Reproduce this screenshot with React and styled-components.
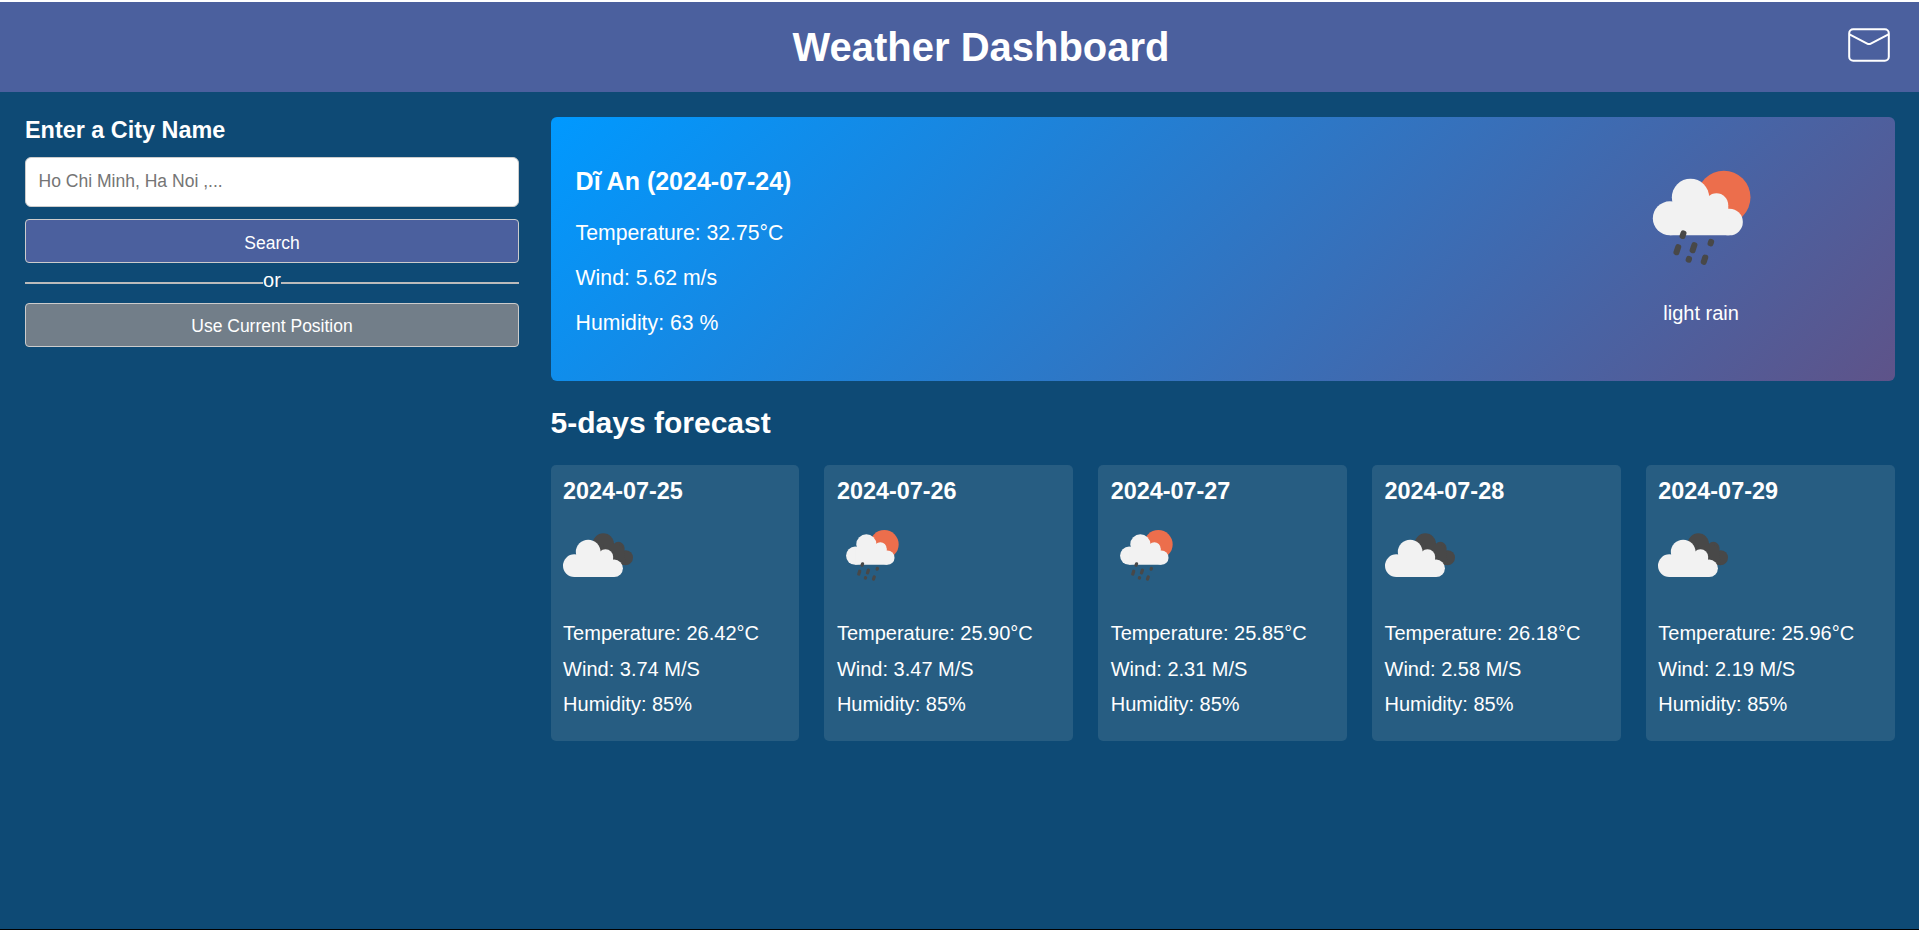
import React from "react";
import styled, { createGlobalStyle } from "styled-components";

const GlobalStyle = createGlobalStyle`
  * { box-sizing: border-box; margin: 0; padding: 0; }
  body {
    margin: 0;
    background: #0e4a75;
    color: #fff;
    font-family: Arial, "Liberation Sans", sans-serif;
    font-size: 20px;
  }
`;

const Page = styled.div`
  display: flex;
  flex-direction: column;
  height: 930px;
  border-top: 2px solid #fff;
  border-bottom: 1px solid #000;
  overflow: hidden;
`;

const Header = styled.header`
  display: flex;
  align-items: center;
  height: 90px;
  padding: 0 29px 0 114px;
  background: #4b609e;
`;

const Title = styled.h1`
  flex: 1;
  font-size: 40px;
  line-height: 46px;
  text-align: center;
`;

const MailIcon = styled.svg`
  display: block;
  width: 42px;
  height: 34px;
  margin-bottom: 4px;
  fill: none;
  stroke: #fff;
  stroke-width: 2;
`;

const Main = styled.main`
  display: flex;
  gap: 31.6px;
  padding: 25px 24.4px 0 25px;
`;

const Sidebar = styled.aside`
  width: 494px;
  flex: none;
`;

const Label = styled.h3`
  font-size: 23.4px;
  line-height: 26px;
  margin-bottom: 14px;
`;

const CityInput = styled.input`
  display: block;
  width: 100%;
  height: 50px;
  padding: 0 12.5px 1px;
  margin-bottom: 12px;
  border: 1px solid #ccc;
  border-radius: 6px;
  background: #fff;
  font-family: inherit;
  font-size: 17.55px;
  &::placeholder { color: #757575; }
`;

const Button = styled.button`
  display: block;
  width: 100%;
  height: 44px;
  padding-top: ${(p) => (p.$muted ? 2 : 4)}px;
  border: 1px solid #ccc;
  border-radius: 4px;
  background: ${(p) => (p.$muted ? "#727e89" : "#4b609e")};
  color: #fff;
  font-family: inherit;
  font-size: 17.5px;
`;

const Divider = styled.div`
  display: flex;
  align-items: center;
  height: 40px;
  line-height: 40px;
`;

const Rule = styled.span`
  flex: 1;
  height: 2px;
  background: #bbb;
`;

const DividerText = styled.span`
  height: 40px;
  line-height: 35px;
`;

const Content = styled.section`
  flex: 1;
`;

const Current = styled.div`
  display: flex;
  justify-content: space-between;
  height: 264px;
  padding: 50px 128.5px 0 25px;
  border-radius: 6px;
  background: linear-gradient(135deg, #0099ff, #5e5389);
`;

const CurrentCity = styled.h2`
  font-size: 25px;
  line-height: 29px;
  margin-bottom: 14px;
`;

const CurrentLine = styled.p`
  font-size: 21.22px;
  line-height: 45px;
`;

const Condition = styled.div`
  width: 130px;
  margin-top: -15px;
  text-align: center;
`;

const ConditionText = styled.p`
  font-size: 20px;
  line-height: 24px;
  margin-top: 19px;
`;

const ForecastTitle = styled.h2`
  font-size: 30px;
  line-height: 34px;
  margin: 25px 0;
`;

const Forecast = styled.div`
  display: grid;
  grid-template-columns: repeat(5, 1fr);
  gap: 25px;
`;

const Day = styled.article`
  height: 276px;
  padding: 13px 12.5px;
  border-radius: 5px;
  background: #275d82;
`;

const DayDate = styled.h3`
  font-size: 23.4px;
  line-height: 26px;
  margin-bottom: 16px;
`;

const DayLine = styled.p`
  line-height: 35.5px;
`;

const DayStats = styled.div`
  margin-top: 26px;
`;

const WeatherSvg = styled.svg`
  display: block;
  width: ${(p) => p.$size}px;
  height: ${(p) => p.$size}px;
`;

const DROPS = [
  [190.5, 284, 26],
  [173.5, 329, 34],
  [222, 323, 34],
  [274, 308, 22],
  [208, 358, 20],
  [255, 359, 31],
];

function RainIcon({ size }) {
  return (
    <WeatherSvg $size={size} viewBox="49.5 36 390 390">
      <circle cx="313" cy="172" r="80" fill="#ec6e4c" />
      <g fill="#f2f2f2">
        <circle cx="151" cy="235" r="51" />
        <circle cx="213" cy="172" r="56" />
        <circle cx="291" cy="195" r="35" />
        <circle cx="330" cy="246" r="40" />
        <path d="M151 200H213V172H268L291 195H326L330 286H151Z" />
      </g>
      <g fill="#484848">
        {DROPS.map(([x, y, h]) => (
          <rect key={x} x={x - 9} y={y - h / 2} width="18" height={h} rx="8" transform={`rotate(18 ${x} ${y})`} />
        ))}
      </g>
    </WeatherSvg>
  );
}

function CloudsIcon({ size }) {
  return (
    <WeatherSvg $size={size} viewBox="69 180 210 210">
      <g fill="#484848">
        <circle cx="190" cy="252" r="32" />
        <circle cx="235" cy="264" r="18.5" />
        <circle cx="256.5" cy="293" r="22.5" />
        <path d="M190 252H235L253 264L256 315H235L190 300Z" />
      </g>
      <g fill="#f2f2f2">
        <circle cx="103" cy="317" r="34" />
        <circle cx="144.5" cy="276" r="37" />
        <circle cx="196.5" cy="291" r="23" />
        <circle cx="222.5" cy="325" r="26.3" />
        <path d="M103 290H144V276H181L196 291H219L222.5 351.3H103Z" />
      </g>
    </WeatherSvg>
  );
}

const DAYS = [
  { date: "2024-07-25", Icon: CloudsIcon, temp: "26.42", wind: "3.74" },
  { date: "2024-07-26", Icon: RainIcon, temp: "25.90", wind: "3.47" },
  { date: "2024-07-27", Icon: RainIcon, temp: "25.85", wind: "2.31" },
  { date: "2024-07-28", Icon: CloudsIcon, temp: "26.18", wind: "2.58" },
  { date: "2024-07-29", Icon: CloudsIcon, temp: "25.96", wind: "2.19" },
];

export default function App() {
  return (
    <Page>
      <GlobalStyle />
      <Header>
        <Title>Weather Dashboard</Title>
        <MailIcon viewBox="0 0 42 34">
          <rect x="1.2" y="1.2" width="39.6" height="31.6" rx="4" />
          <path d="M1.5 6.3L19.2 15.6Q21 16.5 22.8 15.6L40.5 6.3" />
        </MailIcon>
      </Header>
      <Main>
        <Sidebar>
          <Label>Enter a City Name</Label>
          <CityInput placeholder="Ho Chi Minh, Ha Noi ,..." />
          <Button>Search</Button>
          <Divider>
            <Rule />
            <DividerText>or</DividerText>
            <Rule />
          </Divider>
          <Button $muted>Use Current Position</Button>
        </Sidebar>
        <Content>
          <Current>
            <div>
              <CurrentCity>Dĩ An (2024-07-24)</CurrentCity>
              <CurrentLine>Temperature: 32.75°C</CurrentLine>
              <CurrentLine>Wind: 5.62 m/s</CurrentLine>
              <CurrentLine>Humidity: 63 %</CurrentLine>
            </div>
            <Condition>
              <RainIcon size={130} />
              <ConditionText>light rain</ConditionText>
            </Condition>
          </Current>
          <ForecastTitle>5-days forecast</ForecastTitle>
          <Forecast>
            {DAYS.map(({ date, Icon, temp, wind }) => (
              <Day key={date}>
                <DayDate>{date}</DayDate>
                <Icon size={70} />
                <DayStats>
                  <DayLine>Temperature: {temp}°C</DayLine>
                  <DayLine>Wind: {wind} M/S</DayLine>
                  <DayLine>Humidity: 85%</DayLine>
                </DayStats>
              </Day>
            ))}
          </Forecast>
        </Content>
      </Main>
    </Page>
  );
}
